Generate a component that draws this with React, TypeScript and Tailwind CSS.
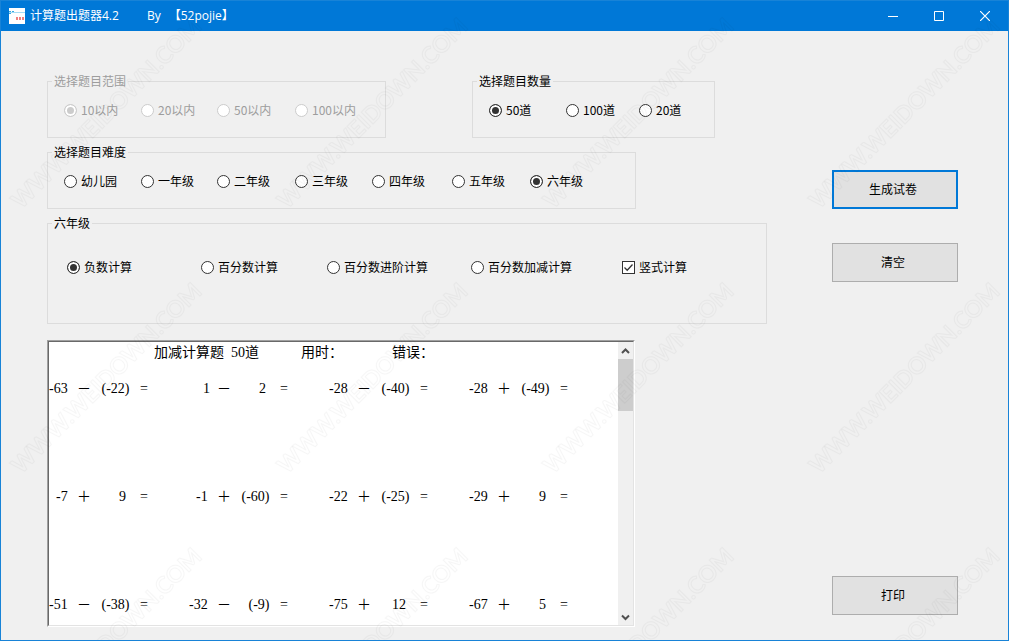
import { useState } from "react";
import clsx from "clsx";

const ranges = ["10以内", "20以内", "50以内", "100以内"];
const amounts = ["50道", "100道", "20道"];
const grades = ["幼儿园", "一年级", "二年级", "三年级", "四年级", "五年级", "六年级"];
const kinds = ["负数计算", "百分数计算", "百分数进阶计算", "百分数加减计算"];

// two spaces are as wide as one digit in the sheet's font
const CELL = "  ";

// a minus sign is narrower than a digit, the tab brings the line back to the cell grid
const equation = (a: string, op: string, b: string) => {
  const left = CELL.repeat(3 - a.length) + a + (a.startsWith("-") ? "\t" : "");
  const right = b.startsWith("(")
    ? CELL.repeat(5 - b.length) + " " + b + "   "
    : CELL.repeat(4 - b.length) + b + "    ";
  return `${left}${CELL}${op}${CELL}${right}=`;
};

const rows = [
  [["-63", "－", "(-22)"], ["1", "－", "2"], ["-28", "－", "(-40)"], ["-28", "＋", "(-49)"]],
  [["-7", "＋", "9"], ["-1", "＋", "(-60)"], ["-22", "＋", "(-25)"], ["-29", "＋", "9"]],
  [["-51", "－", "(-38)"], ["-32", "－", "(-9)"], ["-75", "＋", "12"], ["-67", "＋", "5"]],
];

const heading = `${CELL.repeat(15)}加减计算题${CELL}50道${CELL.repeat(6)}用时：${CELL.repeat(7)}错误：`;
const lines = rows.map((row) => row.map(([a, op, b]) => equation(a, op, b)).join("\t" + CELL.repeat(5)));
const paper = heading + "\n\n" + lines.join("\n\n\n\n\n\n");

const Group = ({ title, disabled, className, children }: any) => (
  <fieldset
    disabled={disabled}
    className={clsx("min-w-0 border border-[#dcdcdc]", disabled ? "text-[#9d9d9d]" : "text-black", className)}
  >
    <legend className="ml-1 px-[2px] leading-4">{title}</legend>
    {children}
  </fieldset>
);

const Radio = ({ name, label, checked, onChange }: any) => (
  <label className="flex items-center gap-1 whitespace-nowrap leading-4">
    <input
      type="radio"
      name={name}
      checked={checked}
      onChange={onChange}
      className="size-[13px] shrink-0 appearance-none rounded-full border border-[#333] bg-white checked:bg-[#333] checked:shadow-[inset_0_0_0_2px_white] disabled:border-[#ccc] disabled:checked:bg-[#ccc]"
    />
    {label}
  </label>
);

const RadioList = ({ name, items, initial }: { name: string; items: string[]; initial: string }) => {
  const [value, setValue] = useState(initial);
  return (
    <>
      {items.map((item) => (
        <Radio key={item} name={name} label={item} checked={value === item} onChange={() => setValue(item)} />
      ))}
    </>
  );
};

const Watermark = () => (
  <svg aria-hidden="true" className="pointer-events-none absolute inset-0 size-full">
    <defs>
      <pattern id="mark" x="0" y="-50" width="266" height="265" patternUnits="userSpaceOnUse">
        <text
          transform="translate(20 259) rotate(-45)"
          fontFamily="Lato, sans-serif"
          fontWeight="700"
          fontSize="23"
          fill="none"
          stroke="#000"
          strokeOpacity="0.035"
          strokeWidth="1"
        >
          WWW.WEIDOWN.COM
        </text>
      </pattern>
    </defs>
    <rect width="100%" height="100%" fill="url(#mark)" />
  </svg>
);

const TitleBar = () => (
  <header className="flex h-[30px] items-center bg-[#0078d7] pl-2 text-white">
    <svg viewBox="0 0 16 16" className="size-4">
      <rect width="16" height="16" fill="#fff" />
      <path d="M0 4.5h16" stroke="#a5dcf5" />
      <path d="M0 3.500h5M0 5.500h3" stroke="#38a8e0" strokeDasharray="2 1" />
      <path d="M7 10.500h9" stroke="#f08080" strokeWidth="3" strokeDasharray="2 1" />
    </svg>
    <h1 className="ml-[5px] flex grow font-['Open_Sans','Noto_Sans_CJK_SC',sans-serif] text-xs leading-4">
      <span className="mr-7">计算题出题器4.2</span>
      <span className="mr-2">By</span>
      <span>【52pojie】</span>
    </h1>
    <button aria-label="最小化" className="grid h-full w-[46px] place-items-center">
      <svg viewBox="0 0 10 10" className="size-[10px]" stroke="#fff">
        <path d="M0 5.5h10" />
      </svg>
    </button>
    <button aria-label="最大化" className="grid h-full w-[46px] place-items-center">
      <svg viewBox="0 0 10 10" className="size-[10px]" stroke="#fff" fill="none">
        <path d="M.5.5h9v9h-9z" />
      </svg>
    </button>
    <button aria-label="关闭" className="grid h-full w-[46px] place-items-center">
      <svg viewBox="0 0 10 10" className="size-[10px]" stroke="#fff" strokeWidth="1.2">
        <path d="M0 0l10 10M10 0L0 10" />
      </svg>
    </button>
  </header>
);

const Paper = () => (
  <div className="h-[287px] w-[588px] border border-t-[#a0a0a0] border-r-white border-b-white border-l-[#a0a0a0]">
    <div className="flex h-full border border-t-[#696969] border-r-[#e3e3e3] border-b-[#e3e3e3] border-l-[#696969] bg-white">
      <textarea
        aria-label="试卷"
        defaultValue={paper}
        spellCheck={false}
        wrap="off"
        className="grow resize-none overflow-hidden bg-white pt-[2px] font-['Liberation_Serif','Noto_Sans_CJK_SC',serif] text-sm leading-[18px] text-black outline-none [tab-size:7px]"
      />
      <div className="flex w-[15px] flex-col items-center bg-[#f0f0f0]">
        <svg viewBox="0 0 15 17" className="h-[17px] w-full" fill="none" stroke="#505050" strokeWidth="2">
          <path d="M4 11l3.500-3.500 3.500 3.500" />
        </svg>
        <div className="h-[52px] w-full bg-[#cdcdcd]" />
        <svg viewBox="0 0 15 17" className="mt-auto h-[17px] w-full" fill="none" stroke="#505050" strokeWidth="2">
          <path d="M4 7.500l3.500 3.500 3.500-3.500" />
        </svg>
      </div>
    </div>
  </div>
);

const actionClass = "h-[39px] w-[126px] bg-[#e1e1e1] pr-1 pb-[2px] text-black";

export default function App() {
  const [vertical, setVertical] = useState(true);

  return (
    <div
      lang="zh-CN"
      className="relative flex min-h-screen flex-col border border-[#1883d7] bg-[#f0f0f0] font-['Noto_Sans_CJK_SC',sans-serif] text-xs"
    >
      <TitleBar />
      <main className="flex grow justify-between pt-[42px] pr-[50px] pb-[13px] pl-[46px]">
        <div className="flex flex-col gap-[6px]">
          <div className="flex gap-[86px]">
            <Group title="选择题目范围" disabled className="h-[65px] w-[339px]">
              <div className="grid grid-cols-[77px_76px_78px_auto] pt-[13px] pl-4">
                <RadioList name="range" items={ranges} initial="10以内" />
              </div>
            </Group>
            <Group title="选择题目数量" className="h-[65px] w-[243px]">
              <div className="grid grid-cols-[77px_73px_auto] pt-[13px] pl-4">
                <RadioList name="amount" items={amounts} initial="50道" />
              </div>
            </Group>
          </div>
          <Group title="选择题目难度" className="h-[65px] w-[589px]">
            <div className="grid grid-cols-[77px_76px_78px_77px_80px_78px_auto] pt-[13px] pl-4">
              <RadioList name="grade" items={grades} initial="六年级" />
            </div>
          </Group>
          <Group title="六年级" className="h-[109px] w-[720px]">
            <div className="grid grid-cols-[134px_126px_144px_151px_auto] pt-[28px] pl-[19px]">
              <RadioList name="kind" items={kinds} initial="负数计算" />
              <label className="flex items-center gap-1 leading-4">
                <span className="grid size-[13px]">
                  <input
                    type="checkbox"
                    checked={vertical}
                    onChange={(e) => setVertical(e.target.checked)}
                    className="peer col-start-1 row-start-1 size-[13px] appearance-none border border-[#333] bg-white"
                  />
                  <svg
                    viewBox="0 0 13 13"
                    className="pointer-events-none invisible col-start-1 row-start-1 size-[13px] peer-checked:visible"
                    fill="none"
                    stroke="#333"
                    strokeWidth="1.3"
                  >
                    <path d="M2.500 6.500l2.700 2.700 5.300-5.700" />
                  </svg>
                </span>
                竖式计算
              </label>
            </div>
          </Group>
          <div className="pt-[10px]">
            <Paper />
          </div>
        </div>
        <div className="flex flex-col pt-[97px] pb-3">
          <button className={clsx(actionClass, "border-2 border-[#0078d7]")}>生成试卷</button>
          <button className={clsx(actionClass, "mt-[34px] border border-[#adadad]")}>清空</button>
          <button className={clsx(actionClass, "mt-auto border border-[#adadad]")}>打印</button>
        </div>
      </main>
      <Watermark />
    </div>
  );
}
